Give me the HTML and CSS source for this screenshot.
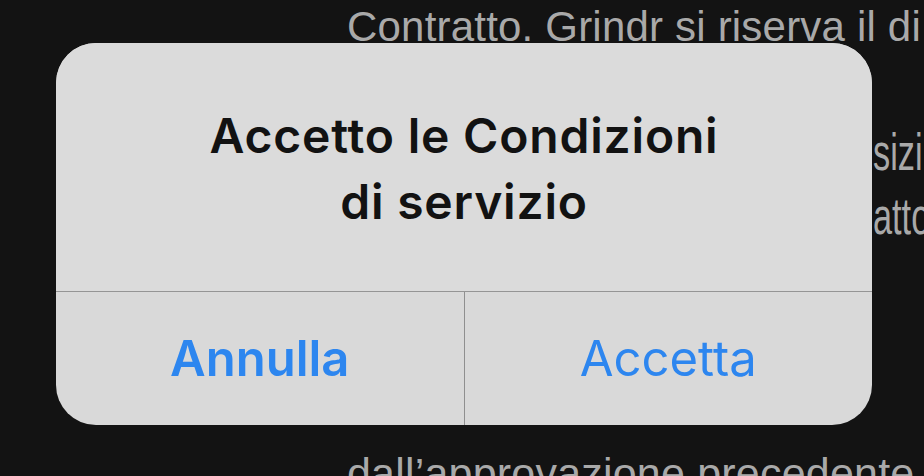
FILE: index.html
```html
<!DOCTYPE html>
<html lang="it">
<head>
<meta charset="utf-8">
<title>Condizioni di servizio</title>
<link rel="stylesheet" href="styles.css">
</head>
<body>
<div class="page">
  <div class="doc">
    <div class="line line-top">Contratto. Grindr si riserva il di</div>
    <div class="line line-side line-side-1"><span class="squeeze">sizi</span></div>
    <div class="line line-side line-side-2"><span class="squeeze">atto</span></div>
    <div class="line line-bottom">dall’approvazione precedente</div>
  </div>
  <div class="alert" role="dialog">
    <div class="alert-body">
      <div class="alert-title">Accetto le Condizioni<br>di servizio</div>
    </div>
    <div class="alert-actions">
      <button class="action action-cancel">Annulla</button>
      <button class="action action-accept">Accetta</button>
    </div>
  </div>
</div>
</body>
</html>
```

FILE: styles.css
```css
html, body {
  margin: 0;
  padding: 0;
  background: #131313;
  width: 924px;
  height: 476px;
  overflow: hidden;
}

.page {
  position: relative;
  width: 924px;
  height: 476px;
  overflow: hidden;
}

.doc {
  display: flex;
  flex-direction: column;
  font-family: "Liberation Sans", Arial, sans-serif;
  color: #a9a9a9;
  white-space: nowrap;
  width: 924px;
  overflow: hidden;
}

.line-top {
  font-size: 42px;
  line-height: 48px;
  letter-spacing: 0.2px;
  padding-left: 347px;
  margin-top: 3px;
}

.line-side {
  font-size: 52px;
  line-height: 60px;
  padding-left: 873px;
}

.line-side-1 {
  margin-top: 71px;
}

.line-side-2 {
  margin-top: 4px;
}

.squeeze {
  display: inline-block;
  transform: scaleX(0.66);
  transform-origin: left center;
}

.line-bottom {
  font-size: 43px;
  line-height: 50px;
  letter-spacing: 0.2px;
  padding-left: 347px;
  margin-top: 202px;
}

.alert {
  position: absolute;
  left: 56px;
  top: 43px;
  width: 816px;
  height: 382px;
  border-radius: 40px;
  background: #d9d9d9;
  overflow: hidden;
  display: flex;
  flex-direction: column;
}

.alert-body {
  height: 249px;
  box-sizing: border-box;
  border-bottom: 1px solid #959595;
  padding-top: 60px;
  background: #dbdbdb;
}

.alert-title {
  font-family: Inter, Roboto, "Liberation Sans", sans-serif;
  font-weight: 560;
  font-size: 48px;
  line-height: 66px;
  letter-spacing: 0.8px;
  color: #121212;
  text-align: center;
}

.alert-actions {
  flex: 1;
  display: flex;
}

.action {
  flex: 1;
  border: 0;
  margin: 0;
  padding: 0;
  background: transparent;
  font-family: Inter, Roboto, "Liberation Sans", sans-serif;
  font-size: 49px;
  color: #2d86ef;
  display: flex;
  align-items: center;
  justify-content: center;
}

.action-cancel {
  font-weight: 600;
  border-right: 1px solid #8f8f8f;
}

.action-accept {
  font-weight: 400;
}
```
